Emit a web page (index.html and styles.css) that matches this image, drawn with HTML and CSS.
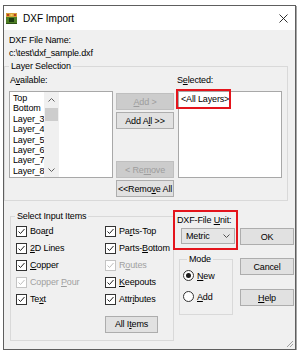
FILE: index.html
```html
<!DOCTYPE html>
<html>
<head>
<meta charset="utf-8">
<title>DXF Import</title>
<link rel="stylesheet" href="styles.css">
</head>
<body>
<div class="window">
  <div class="titlebar">
    <svg class="app-icon" width="11" height="11" viewBox="0 0 11 11">
      <rect x="0" y="0" width="11" height="11" fill="#4f7f25"/>
      <rect x="0" y="0" width="11" height="4" fill="#d8a03a"/>
      <rect x="1" y="1" width="2" height="2" fill="#b8401e"/>
      <rect x="4.5" y="1" width="2" height="2" fill="#f0d060"/>
      <rect x="8" y="1" width="2" height="2" fill="#b8401e"/>
      <rect x="3" y="5" width="5" height="4" fill="#1c3b10"/>
      <rect x="0" y="10" width="11" height="1" fill="#2e5316"/>
    </svg>
    <span class="title">DXF Import</span>
    <svg class="close" width="9" height="9" viewBox="0 0 9 9">
      <path d="M0.5 0.5L8.5 8.5M8.5 0.5L0.5 8.5" stroke="#1a1a1a" stroke-width="0.9" fill="none"/>
    </svg>
  </div>
  <div class="client">
    <div class="line">DXF File Name:</div>
    <div class="line">c:\test\dxf_sample.dxf</div>

    <fieldset class="group layers">
      <legend>Layer Selection</legend>
      <div class="layer-cols">
        <div class="col-list">
          <div class="lbl">A<u>v</u>ailable:</div>
          <div class="listbox avail">
            <div class="items">
              <div>Top</div>
              <div>Bottom</div>
              <div>Layer_3</div>
              <div>Layer_4</div>
              <div>Layer_5</div>
              <div>Layer_6</div>
              <div>Layer_7</div>
              <div>Layer_8</div>
            </div>
            <div class="vscroll">
              <div class="arrow">
                <svg width="7" height="4" viewBox="0 0 7 4"><path d="M0.5 3.5L3.5 0.5L6.5 3.5" stroke="#606060" fill="none"/></svg>
              </div>
              <div class="thumb"></div>
              <div class="spacer"></div>
              <div class="arrow">
                <svg width="7" height="4" viewBox="0 0 7 4"><path d="M0.5 0.5L3.5 3.5L6.5 0.5" stroke="#606060" fill="none"/></svg>
              </div>
            </div>
          </div>
        </div>
        <div class="col-btns">
          <button class="btn" disabled><u>A</u>dd &gt;</button>
          <button class="btn gap2">Add A<u>l</u>l &gt;&gt;</button>
          <button class="btn gap-big" disabled>&lt; Re<u>m</u>ove</button>
          <button class="btn gap2">&lt;&lt;Remo<u>v</u>e All</button>
        </div>
        <div class="col-list sel">
          <div class="lbl">S<u>e</u>lected:</div>
          <div class="listbox selected">
            <span class="hl">&lt;All Layers&gt;</span>
          </div>
        </div>
      </div>
    </fieldset>

    <div class="bottom">
      <fieldset class="group items">
        <legend>Select Input Items</legend>
        <div class="checks">
          <div class="chk"><span class="box"><svg width="9" height="9" viewBox="0 0 9 9"><path d="M1.5 4.5L3.5 6.5L7.5 2" stroke="#222" stroke-width="1" fill="none"/></svg></span><span>Boa<u>r</u>d</span></div>
          <div class="chk"><span class="box"><svg width="9" height="9" viewBox="0 0 9 9"><path d="M1.5 4.5L3.5 6.5L7.5 2" stroke="#222" stroke-width="1" fill="none"/></svg></span><span>Pa<u>r</u>ts-Top</span></div>
          <div class="chk"><span class="box"><svg width="9" height="9" viewBox="0 0 9 9"><path d="M1.5 4.5L3.5 6.5L7.5 2" stroke="#222" stroke-width="1" fill="none"/></svg></span><span><u>2</u>D Lines</span></div>
          <div class="chk"><span class="box"><svg width="9" height="9" viewBox="0 0 9 9"><path d="M1.5 4.5L3.5 6.5L7.5 2" stroke="#222" stroke-width="1" fill="none"/></svg></span><span>Parts-<u>B</u>ottom</span></div>
          <div class="chk"><span class="box"><svg width="9" height="9" viewBox="0 0 9 9"><path d="M1.5 4.5L3.5 6.5L7.5 2" stroke="#222" stroke-width="1" fill="none"/></svg></span><span><u>C</u>opper</span></div>
          <div class="chk off"><span class="box"><svg width="9" height="9" viewBox="0 0 9 9"><path d="M1.5 4.5L3.5 6.5L7.5 2" stroke="#bdbdbd" stroke-width="1" fill="none"/></svg></span><span>R<u>o</u>utes</span></div>
          <div class="chk off"><span class="box"><svg width="9" height="9" viewBox="0 0 9 9"><path d="M1.5 4.5L3.5 6.5L7.5 2" stroke="#bdbdbd" stroke-width="1" fill="none"/></svg></span><span>Copper <u>P</u>our</span></div>
          <div class="chk"><span class="box"><svg width="9" height="9" viewBox="0 0 9 9"><path d="M1.5 4.5L3.5 6.5L7.5 2" stroke="#222" stroke-width="1" fill="none"/></svg></span><span><u>K</u>eepouts</span></div>
          <div class="chk"><span class="box"><svg width="9" height="9" viewBox="0 0 9 9"><path d="M1.5 4.5L3.5 6.5L7.5 2" stroke="#222" stroke-width="1" fill="none"/></svg></span><span>Te<u>x</u>t</span></div>
          <div class="chk"><span class="box"><svg width="9" height="9" viewBox="0 0 9 9"><path d="M1.5 4.5L3.5 6.5L7.5 2" stroke="#222" stroke-width="1" fill="none"/></svg></span><span>Attr<u>i</u>butes</span></div>
        </div>
        <button class="btn all-items">All I<u>t</u>ems</button>
      </fieldset>

      <div class="mid">
        <div class="unit-box">
          <div class="lbl">DXF-File <u>U</u>nit:</div>
          <div class="combo">
            <span>Metric</span>
            <svg width="7" height="4" viewBox="0 0 7 4"><path d="M0.5 0.5L3.5 3.5L6.5 0.5" stroke="#505050" fill="none"/></svg>
          </div>
        </div>
        <fieldset class="group mode">
          <legend>Mode</legend>
          <div class="radio"><span class="dot on"></span><span><u>N</u>ew</span></div>
          <div class="radio"><span class="dot"></span><span><u>A</u>dd</span></div>
        </fieldset>
      </div>

      <div class="btn-col">
        <button class="btn ok">OK</button>
        <button class="btn cancel">Cancel</button>
        <button class="btn help"><u>H</u>elp</button>
      </div>
    </div>
  </div>
  <svg class="grip" width="9" height="9" viewBox="0 0 9 9">
    <path d="M8 2L2 8M8 5L5 8M8 8L8 8" stroke="#a0a0a0" stroke-width="1" fill="none"/>
  </svg>
</div>
</body>
</html>
```

FILE: styles.css
```css
html, body {
  margin: 0;
  padding: 0;
  background: #ffffff;
}

body {
  font-family: "Liberation Sans", Arial, sans-serif;
  font-size: 9px;
  letter-spacing: -0.15px;
  color: #000;
}

u {
  text-decoration: underline;
  text-underline-offset: 1px;
}

.window {
  position: relative;
  box-sizing: border-box;
  width: 293px;
  height: 345px;
  margin: 5px 0 0 3px;
  border: 1px solid #5e5e5e;
  box-shadow: 1px 1px 0 rgba(0, 0, 0, 0.35);
  background: #f0f0f0;
  display: flex;
  flex-direction: column;
}

/* title bar */
.titlebar {
  height: 24px;
  flex: none;
  background: #ffffff;
  display: flex;
  align-items: center;
}

.app-icon {
  margin-left: 2px;
  flex: none;
}

.title {
  margin-left: 6px;
  font-size: 10px;
  letter-spacing: 0;
}

.close {
  margin-left: auto;
  margin-right: 7px;
}

/* client */
.client {
  flex: 1;
  padding-top: 4px;
}

.line {
  margin-left: 5px;
  line-height: 13px;
}

fieldset.group {
  margin: 0;
  padding: 0;
  border: 1px solid #d9d9d9;
  min-width: 0;
  box-sizing: border-box;
}

fieldset.group > legend {
  margin-left: 4px;
  padding: 0 2px;
  line-height: 12px;
}

.layers {
  margin: 3px 0 0 6px;
  width: 284px;
}

.layer-cols {
  display: flex;
  padding: 0 0 3px 4px;
}

.col-list {
  width: 104px;
  flex: none;
}

.lbl {
  margin-top: 2px;
  margin-left: 1px;
  line-height: 12px;
  white-space: nowrap;
}

.sel {
  margin-left: 4px;
}

.sel .lbl {
  margin-left: -1px;
}

.listbox {
  box-sizing: border-box;
  margin-top: 5px;
  height: 87px;
  background: #ffffff;
  border: 1px solid #a8a8a8;
}

.avail {
  display: flex;
}

.items {
  flex: 1;
  padding: 1px 0 0 3px;
  line-height: 10.4px;
  overflow: hidden;
}

.vscroll {
  width: 15px;
  flex: none;
  background: #f0f0f0;
  display: flex;
  flex-direction: column;
}

.vscroll .arrow {
  height: 15px;
  display: flex;
  align-items: center;
  justify-content: center;
}

.vscroll .thumb {
  height: 13px;
  margin: 1px 1px 0 1px;
  background: #cdcdcd;
}

.vscroll .spacer {
  flex: 1;
}

.selected .hl {
  display: inline-block;
  box-sizing: border-box;
  width: 51px;
  height: 16px;
  margin: -1px 0 0 -1px;
  padding-left: 3px;
  line-height: 16px;
  outline: 2px solid #e4141c;
  vertical-align: top;
  white-space: nowrap;
}

/* buttons */
.btn {
  box-sizing: border-box;
  display: flex;
  align-items: center;
  justify-content: center;
  height: 17px;
  margin: 0;
  padding: 0;
  font: inherit;
  letter-spacing: inherit;
  color: #000;
  background: #e1e1e1;
  border: 1px solid #adadad;
  border-radius: 0;
  white-space: nowrap;
}

.btn:disabled {
  background: #cccccc;
  border-color: #bfbfbf;
  color: #9d9d9d;
}

.col-btns {
  width: 58px;
  flex: none;
  margin-left: 3px;
  padding-top: 21px;
  display: flex;
  flex-direction: column;
}

.gap2 {
  margin-top: 2px;
}

.gap-big {
  margin-top: 32px;
}

/* bottom area */
.bottom {
  display: flex;
  margin: 9px 0 0 6px;
}

.items {
  flex: none;
}

fieldset.items {
  width: 164px;
  padding-bottom: 7px;
}

.checks {
  display: grid;
  grid-template-columns: 89px auto;
  grid-auto-rows: 17px;
  margin-top: 1px;
  padding-left: 5px;
}

.chk {
  display: flex;
  align-items: center;
  white-space: nowrap;
}

.chk .box {
  box-sizing: border-box;
  width: 11px;
  height: 11px;
  margin-right: 3px;
  flex: none;
  border: 1px solid #333333;
  background: #ffffff;
  display: flex;
  align-items: center;
  justify-content: center;
}

.chk.off {
  color: #a0a0a0;
}

.chk.off .box {
  border-color: #c4c4c4;
}

.all-items {
  width: 53px;
  margin: 8px 0 0 94px;
}

.mid {
  width: 65px;
  flex: none;
  margin-left: -1px;
}

.unit-box {
  box-sizing: border-box;
  height: 40px;
  border: 2px solid #e4141c;
  padding: 2px 0 0 2px;
}

.unit-box .lbl {
  margin: 0;
}

.combo {
  box-sizing: border-box;
  width: 54px;
  height: 16px;
  margin: 2px 0 0 4px;
  padding: 0 4px 0 4px;
  background: #e5e5e5;
  border: 1px solid #adadad;
  display: flex;
  align-items: center;
  justify-content: space-between;
}

fieldset.mode {
  width: 54px;
  margin: 3px 0 0 6px;
  padding: 0 0 7px 3px;
}

.radio {
  height: 21px;
  display: flex;
  align-items: center;
  white-space: nowrap;
}

.dot {
  box-sizing: border-box;
  width: 11px;
  height: 11px;
  margin-right: 3px;
  border: 1px solid #333333;
  border-radius: 50%;
  background: #ffffff;
  display: flex;
  align-items: center;
  justify-content: center;
  flex: none;
}

.dot.on::after {
  content: "";
  width: 5px;
  height: 5px;
  border-radius: 50%;
  background: #1a1a1a;
}

.btn-col {
  width: 54px;
  flex: none;
  margin-left: 2px;
  display: flex;
  flex-direction: column;
}

.ok {
  margin-top: 18px;
}

.cancel {
  margin-top: 13px;
}

.help {
  margin-top: 14px;
}

.grip {
  position: absolute;
  right: 1px;
  bottom: 1px;
}
```
